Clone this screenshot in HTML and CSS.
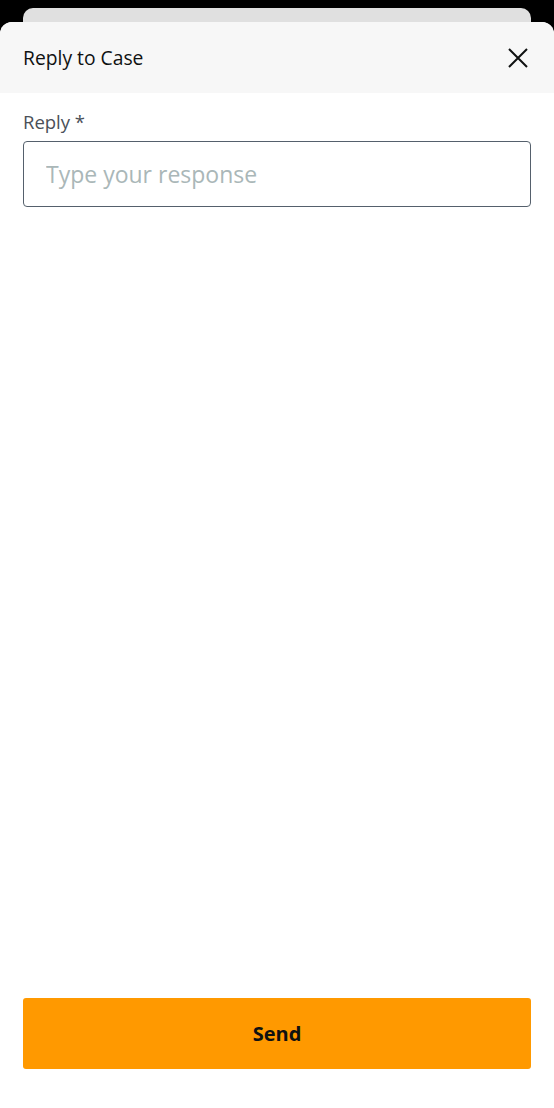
FILE: index.html
```html
<!DOCTYPE html>
<html lang="en">
<head>
<meta charset="utf-8">
<title>Reply to Case</title>
<link rel="stylesheet" href="styles.css">
</head>
<body>
<div class="screen">
  <div class="back-card"></div>
  <div class="sheet">
    <header class="sheet-header">
      <h1 class="sheet-title">Reply to Case</h1>
      <button class="close-btn" aria-label="Close">
        <svg width="20" height="20" viewBox="0 0 20 20" aria-hidden="true">
          <path d="M1 1 L19 19 M19 1 L1 19" stroke="#0f1111" stroke-width="2" fill="none" stroke-linecap="butt"/>
        </svg>
      </button>
    </header>
    <div class="sheet-body">
      <label class="field-label" for="reply">Reply *</label>
      <input class="field-input" id="reply" type="text" placeholder="Type your response">
      <div class="spacer"></div>
      <button class="send-btn">Send</button>
    </div>
  </div>
</div>
</body>
</html>
```

FILE: styles.css
```css
html, body {
  margin: 0;
  padding: 0;
  background: #000;
}
body {
  font-family: "Open Sans", "Liberation Sans", sans-serif;
  color: #0f1111;
}
.screen {
  width: 554px;
  height: 1108px;
  display: flex;
  flex-direction: column;
  background: #000;
}
.back-card {
  height: 14px;
  margin: 8px 23px 0;
  background: #e0e0e0;
  border-radius: 10px 10px 0 0;
  flex: none;
}
.sheet {
  flex: 1;
  display: flex;
  flex-direction: column;
  background: #fff;
  border-radius: 12px 12px 0 0;
  overflow: hidden;
}
.sheet-header {
  height: 71px;
  flex: none;
  background: #f7f7f7;
  display: flex;
  align-items: center;
  justify-content: space-between;
  padding: 0 26px 0 23px;
}
.sheet-title {
  margin: 0;
  font-size: 19.3px;
  line-height: 28px;
  font-weight: 400;
  color: #0f1111;
}
.close-btn {
  border: 0;
  background: none;
  padding: 0;
  width: 20px;
  height: 20px;
  display: flex;
}
.sheet-body {
  flex: 1;
  display: flex;
  flex-direction: column;
  padding: 17px 23px 39px;
}
.field-label {
  font-size: 18.5px;
  line-height: 24px;
  color: #4a5058;
  margin-bottom: 7px;
}
.field-input {
  box-sizing: border-box;
  height: 66px;
  width: 100%;
  border: 1px solid #55606c;
  border-radius: 4px;
  padding: 0 22px;
  font-family: inherit;
  font-size: 23px;
  color: #0f1111;
  background: #fff;
  outline: none;
}
.field-input::placeholder {
  color: #aab7b8;
}
.spacer {
  flex: 1;
}
.send-btn {
  height: 71px;
  width: 100%;
  border: 0;
  border-radius: 3px;
  background: #ff9900;
  color: #0f1111;
  font-family: inherit;
  font-size: 20px;
  font-weight: 700;
}
```
